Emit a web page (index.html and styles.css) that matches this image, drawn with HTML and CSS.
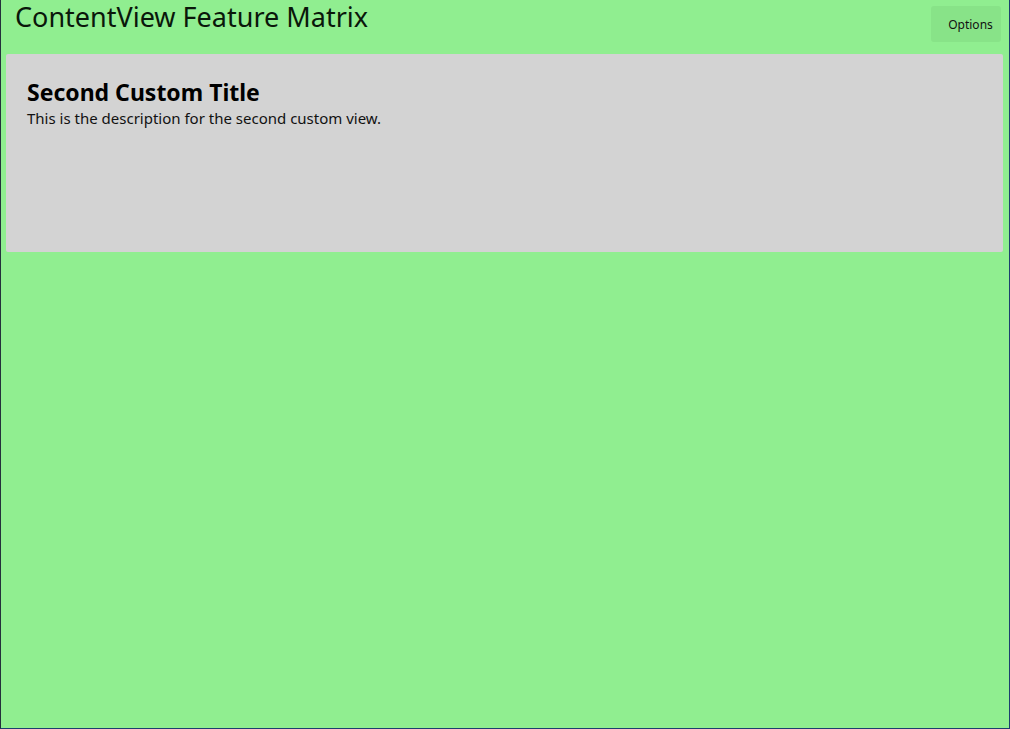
FILE: index.html
```html
<!DOCTYPE html>
<html>
<head>
<meta charset="utf-8">
<link rel="stylesheet" href="styles.css">
</head>
<body>
<div class="window">
  <header class="header">
    <h1 class="page-title">ContentView Feature Matrix</h1>
    <button class="options">Options</button>
  </header>
  <main class="content">
    <section class="card">
      <h2 class="card-title">Second Custom Title</h2>
      <p class="card-desc">This is the description for the second custom view.</p>
    </section>
  </main>
</div>
</body>
</html>
```

FILE: styles.css
```css
html, body {
  margin: 0;
  padding: 0;
  background: #90ee90;
}
.window {
  box-sizing: border-box;
  width: 1010px;
  height: 729px;
  background: #90ee90;
  border-left: 1px solid #24303c;
  border-right: 1px solid #1c3f6e;
  border-bottom: 1px solid #1c3f6e;
  font-family: "Noto Sans", "Open Sans", sans-serif;
  display: flex;
  flex-direction: column;
}
.header {
  display: flex;
  justify-content: space-between;
  align-items: flex-start;
  height: 54px;
  padding: 0 8px 0 14px;
}
.page-title {
  margin: 0;
  font-size: 27px;
  font-weight: 400;
  line-height: 34px;
  color: #0a170a;
}
.options {
  margin-top: 6px;
  width: 70px;
  height: 36px;
  border: none;
  border-radius: 3px;
  background: #88e388;
  color: #111;
  font-family: inherit;
  font-size: 12px;
  padding: 0 0 0 9px;
}
.content {
  padding: 0 6px 0 5px;
}
.card {
  box-sizing: border-box;
  height: 198px;
  background: #d3d3d3;
  border-radius: 2px;
  padding: 23px 21px;
}
.card-title {
  margin: 0;
  font-size: 23px;
  font-weight: 700;
  line-height: 30px;
  color: #000;
}
.card-desc {
  margin: 0;
  font-size: 15px;
  line-height: 22px;
  color: #111;
}
```
